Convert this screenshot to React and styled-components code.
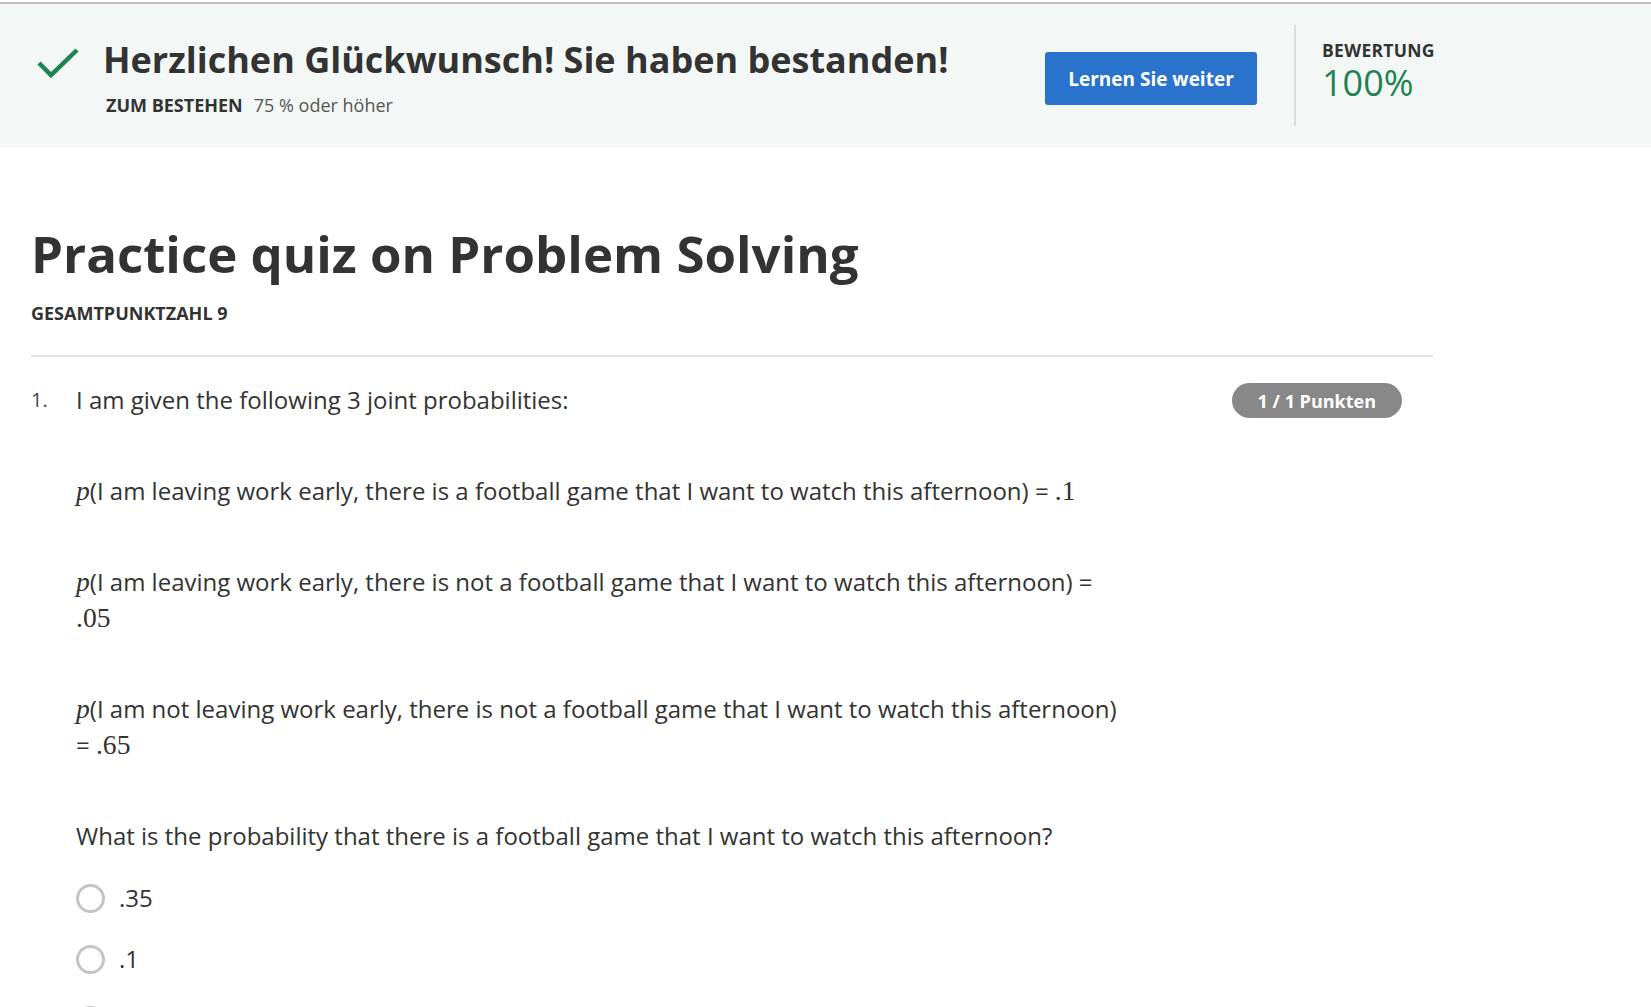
import React from "react";
import styled, { createGlobalStyle } from "styled-components";

const Global = createGlobalStyle`
  html, body { margin: 0; padding: 0; background: #fff; }
  body { font-family: "Open Sans", "Noto Sans", sans-serif; color: #333; }
  * { box-sizing: border-box; }
`;

const Page = styled.div`
  border-top: 2px solid #bdbdbd;
  margin-top: 2px;
  width: 1651px;
  overflow: hidden;
`;

const Banner = styled.header`
  background: #f3f8f6;
  height: 143px;
  display: flex;
  align-items: flex-start;
  padding-left: 37px;
`;

const PassBlock = styled.div`
  width: 1008px;
  display: flex;
  flex-direction: column;
  margin-top: 32px;
`;

const TitleRow = styled.div`
  display: flex;
  align-items: center;
  gap: 24px;
`;

const IconWrap = styled.span`
  display: inline-flex;
  margin-top: 7px;
`;

const BannerTitle = styled.h2`
  margin: 0;
  font-size: 36px;
  font-weight: 700;
  line-height: 48px;
  color: #333;
`;

const PassInfo = styled.div`
  margin: 9px 0 0 69px;
  font-size: 18px;
  line-height: 24px;
  color: #555;
  display: flex;
  gap: 11px;
`;

const Label = styled.span`
  font-weight: 700;
  color: #333;
  text-transform: uppercase;
`;

const PrimaryButton = styled.button`
  width: 212px;
  height: 53px;
  margin-top: 48px;
  border: none;
  border-radius: 3px;
  background: #2a73cc;
  color: #fff;
  font-family: inherit;
  font-size: 19px;
  font-weight: 700;
  cursor: pointer;
  flex-shrink: 0;
`;

const Divider = styled.div`
  width: 2px;
  height: 101px;
  background: #dcdcdc;
  margin: 21px 26px 0 37px;
`;

const Score = styled.div`
  display: flex;
  flex-direction: column;
  gap: 1px;
  margin-top: 35px;
`;

const ScoreLabel = styled.span`
  font-size: 17.5px;
  font-weight: 700;
  letter-spacing: 0.3px;
  color: #333;
  line-height: 22px;
`;

const ScoreValue = styled.span`
  font-size: 36px;
  font-weight: 400;
  color: #1f8354;
  line-height: 42px;
`;

const Main = styled.main`
  width: 1402px;
  margin-left: 31px;
`;

const QuizTitle = styled.h1`
  margin: 70px 0 0;
  font-size: 51px;
  font-weight: 700;
  line-height: 72px;
  color: #333;
`;

const TotalPoints = styled.div`
  margin-top: 12px;
  font-size: 18px;
  font-weight: 700;
  color: #333;
  text-transform: uppercase;
  line-height: 24px;
`;

const Rule = styled.hr`
  margin: 30px 0 0;
  border: none;
  border-top: 2px solid #e1e1e1;
`;

const Question = styled.section`
  display: flex;
  margin-top: 25px;
  padding-right: 31px;
`;

const Number = styled.span`
  width: 45px;
  flex-shrink: 0;
  font-size: 20px;
  line-height: 36px;
  color: #444;
`;

const Body = styled.div`
  width: 1052px;
  font-size: 24px;
  line-height: 36px;
  color: #333;
`;

const Para = styled.p`
  margin: 0 0 55px;
`;

const Math = styled.span`
  font-family: "Liberation Serif", "DejaVu Serif", serif;
  font-size: 1.15em;
  font-style: ${(p) => (p.$italic ? "italic" : "normal")};
`;

const Badge = styled.span`
  margin-left: auto;
  margin-top: 1px;
  height: 35px;
  padding: 0 26px;
  border-radius: 18px;
  background: #888;
  color: #fff;
  font-size: 18px;
  font-weight: 700;
  display: inline-flex;
  align-items: center;
  white-space: nowrap;
  align-self: flex-start;
`;

const Options = styled.div`
  display: flex;
  flex-direction: column;
  gap: 27px;
  margin-top: -28px;
`;

const Option = styled.label`
  display: flex;
  align-items: center;
  gap: 14px;
  font-size: 24px;
  line-height: 34px;
  color: #333;
`;

const Radio = styled.span`
  width: 29px;
  height: 29px;
  border-radius: 50%;
  border: 3px solid #c4c4c4;
  flex-shrink: 0;
`;

const Check = () => (
  <svg width="42" height="32" viewBox="0 0 42 32" fill="none">
    <path d="M2 15 L14 27 L40 2" stroke="#1f8354" strokeWidth="4.5" strokeLinecap="butt" strokeLinejoin="miter" />
  </svg>
);

export default function App() {
  return (
    <>
      <Global />
      <Page>
        <Banner>
          <PassBlock>
            <TitleRow>
              <IconWrap>
                <Check />
              </IconWrap>
              <BannerTitle>Herzlichen Glückwunsch! Sie haben bestanden!</BannerTitle>
            </TitleRow>
            <PassInfo>
              <Label>Zum Bestehen</Label>
              <span>75 % oder höher</span>
            </PassInfo>
          </PassBlock>
          <PrimaryButton>Lernen Sie weiter</PrimaryButton>
          <Divider />
          <Score>
            <ScoreLabel>BEWERTUNG</ScoreLabel>
            <ScoreValue>100%</ScoreValue>
          </Score>
        </Banner>
        <Main>
          <QuizTitle>Practice quiz on Problem Solving</QuizTitle>
          <TotalPoints>Gesamtpunktzahl 9</TotalPoints>
          <Rule />
          <Question>
            <Number>1.</Number>
            <Body>
              <Para>I am given the following 3 joint probabilities:</Para>
              <Para>
                <Math $italic>p</Math>(I am leaving work early, there is a football game that I want to watch this afternoon) = <Math>.1</Math>
              </Para>
              <Para>
                <Math $italic>p</Math>(I am leaving work early, there is not a football game that I want to watch this afternoon) = <Math>.05</Math>
              </Para>
              <Para>
                <Math $italic>p</Math>(I am not leaving work early, there is not a football game that I want to watch this afternoon) = <Math>.65</Math>
              </Para>
              <Para>What is the probability that there is a football game that I want to watch this afternoon?</Para>
              <Options>
                <Option><Radio />.35</Option>
                <Option><Radio />.1</Option>
                <Option><Radio />.2</Option>
              </Options>
            </Body>
            <Badge>1 / 1 Punkten</Badge>
          </Question>
        </Main>
      </Page>
    </>
  );
}
